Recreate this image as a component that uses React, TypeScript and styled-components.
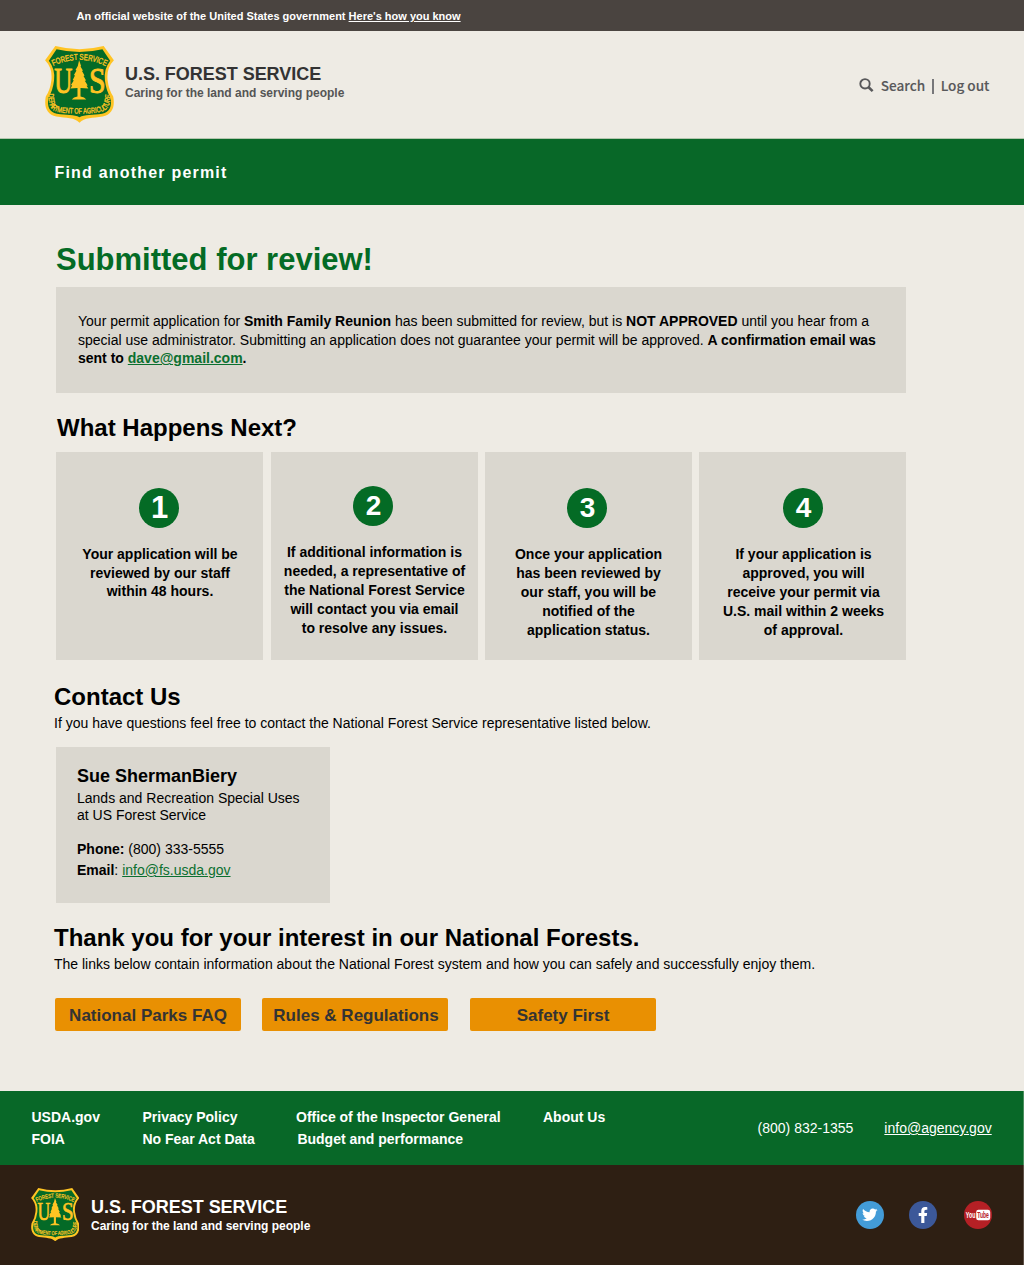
import React from "react";
import styled, { createGlobalStyle } from "styled-components";
import { FaTwitter, FaFacebookF } from "react-icons/fa";

const GlobalStyle = createGlobalStyle`
  *, *::before, *::after { box-sizing: border-box; }
  body {
    margin: 0;
    background: #eeebe4;
    color: #000;
    font-family: "Liberation Sans", Arial, Helvetica, sans-serif;
    font-size: 14px;
  }
  h1, h2, h3, p { margin: 0; }
  a { color: inherit; }
`;

const Page = styled.div`
  width: 1024px;
  height: 1265px;
  display: flex;
  flex-direction: column;
  overflow: hidden;
  white-space: nowrap;
`;

const GovBanner = styled.div`
  height: 31px;
  padding: 1px 76.6px 0;
  display: flex;
  align-items: center;
  background: #4a4440;
  color: #fff;
  font-size: 11px;
  font-weight: 700;
`;

const Masthead = styled.header`
  height: 108px;
  padding: 0 34.5px 0 44.5px;
  display: flex;
  justify-content: space-between;
  align-items: flex-start;
  border-bottom: 1px solid #b4c6ae;
`;

const Brand = styled.div<{ $gap: number; $top: number }>`
  display: flex;
  gap: ${(p) => p.$gap}px;
  padding-top: ${(p) => p.$top}px;
`;

const BrandText = styled.div<{ $top: number; $light?: boolean }>`
  padding-top: ${(p) => p.$top}px;
  color: ${(p) => (p.$light ? "#fff" : "#555")};
`;

const BrandName = styled.div<{ $light?: boolean }>`
  font-size: 18px;
  line-height: 20px;
  font-weight: 700;
  letter-spacing: -0.03px;
  color: ${(p) => (p.$light ? "#fff" : "#333")};
`;

const Tagline = styled.div`
  font-size: 12px;
  line-height: 18px;
  font-weight: 700;
`;

const Utility = styled.nav`
  display: flex;
  align-items: center;
  padding-top: 41px;
  font: 500 13.6px/26px "Noto Sans CJK SC", "Noto Sans", sans-serif;
  -webkit-text-stroke: 0.12px #58585a;
  color: #58585a;
  svg { margin-right: 7px; }
`;

const Divider = styled.span`
  width: 2px;
  height: 15px;
  margin: 3px 7px 0 6.5px;
  background: #77777a;
`;

const NavBar = styled.nav`
  height: 66px;
  padding: 1px 54.5px 0;
  display: flex;
  align-items: center;
  background: #086828;
  color: #fff;
  font-size: 16px;
  font-weight: 700;
  letter-spacing: 1.2px;
`;

const Main = styled.main`
  flex: 1;
  padding: 36px 54px 0;
`;

const PageTitle = styled.h1`
  padding-left: 2px;
  font-size: 31px;
  line-height: 38px;
  color: #046b25;
`;

const Notice = styled.p`
  width: 850px;
  height: 106px;
  margin: 8px 0 0 2px;
  padding: 25px 22px 0;
  background: #dad7cf;
  line-height: 18.6px;
`;

const GreenLink = styled.a`
  color: #0b7030;
`;

const Heading = styled.h2<{ $top: number; $indent?: number }>`
  margin-top: ${(p) => p.$top}px;
  padding-left: ${(p) => p.$indent ?? 0}px;
  font-size: 24px;
  line-height: 28px;
`;

const Lead = styled.p`
  line-height: 18px;
  margin-top: 3px;
`;

const Steps = styled.div`
  width: 850px;
  margin: 10px 0 0 2px;
  display: grid;
  grid-template-columns: 215px 214px 214px 207px;
`;

const StepCard = styled.div<{ $top: number }>`
  width: 207px;
  height: 208px;
  padding-top: ${(p) => p.$top}px;
  display: flex;
  flex-direction: column;
  align-items: center;
  background: #dad7cf;
`;

const StepNumber = styled.div<{ $size: number; $shift: number }>`
  width: 40px;
  height: 40px;
  margin-left: ${(p) => p.$shift}px;
  padding-left: 1px;
  border-radius: 50%;
  display: flex;
  align-items: center;
  justify-content: center;
  background: #046b25;
  color: #fff;
  font-size: ${(p) => p.$size}px;
  font-weight: 700;
`;

const StepText = styled.p<{ $leading: number; $shift: number }>`
  margin: 17px 0 0 ${(p) => p.$shift}px;
  text-align: center;
  font-weight: 700;
  line-height: ${(p) => p.$leading}px;
  white-space: pre-line;
`;

const ContactCard = styled.div`
  width: 274px;
  height: 156px;
  margin: 15px 0 0 2px;
  padding: 18px 21px 0;
  background: #dad7cf;
`;

const ContactName = styled.h3`
  font-size: 18px;
  line-height: 22px;
`;

const ContactRole = styled.p`
  margin-top: 3px;
  line-height: 17px;
`;

const ContactDetails = styled.p`
  margin-top: 15px;
  line-height: 21px;
`;

const Links = styled.div`
  margin: 25px 0 0 1px;
  display: grid;
  grid-template-columns: 207px 208px 186px;
`;

const LinkButton = styled.button<{ $indent?: number }>`
  width: 186px;
  height: 33px;
  padding: 2px 0 0 ${(p) => p.$indent ?? 0}px;
  border: 0;
  border-radius: 2px;
  background: #e99002;
  color: #333;
  font: 700 17px "Liberation Sans", Arial, sans-serif;
`;

const FooterNav = styled.footer`
  height: 74px;
  padding: 0 31.3px 0 31.5px;
  display: flex;
  justify-content: space-between;
  align-items: center;
  background: #086828;
  border-right: 1px solid #4b8f5e;
  color: #fff;
`;

const FooterLinks = styled.div`
  display: grid;
  grid-template-columns: 111px 153.5px 247px auto;
  font-weight: 700;
  line-height: 22px;
`;

const FooterLink = styled.span<{ $indent?: number }>`
  padding-left: ${(p) => p.$indent ?? 0}px;
`;

const FooterContact = styled.div`
  display: flex;
  gap: 31px;
`;

const FooterBrand = styled.footer`
  height: 100px;
  padding: 0 31px 0 30.8px;
  display: flex;
  justify-content: space-between;
  background: #2e1f13;
  border-right: 1px solid #5d5047;
  color: #fff;
`;

const Social = styled.div`
  display: flex;
  padding-top: 36px;
`;

const SocialBadge = styled.a<{ $color: string; $gap?: number }>`
  width: 28px;
  height: 28px;
  margin-left: ${(p) => p.$gap ?? 0}px;
  border-radius: 50%;
  display: flex;
  align-items: center;
  justify-content: center;
  background: ${(p) => p.$color};
  color: #fff;
`;

function Shield({ width, height, id }: { width: number; height: number; id: string }) {
  return (
    <svg width={width} height={height} viewBox="6.7 6.7 68.6 76.6" preserveAspectRatio="none">
      <defs>
        <path id={`${id}-top`} d="M14 27 Q40.8 14 67.5 27" />
        <path id={`${id}-bottom`} d="M10 53 C10 67 13 71.8 22 72.8 Q41 75.2 59.5 72.8 C68.5 71.8 72 67 72 53" />
      </defs>
      <path
        d="M17 6.8 Q41 13 65 6.8 L75.2 21 Q67.5 29 69 41 Q70 50 74.5 57 C76.5 67 73.5 75 64 76.8 C54 78.5 46 77.5 41 83 C36 77.5 28 78.5 18 76.8 C8.5 75 5.5 67 7.5 57 Q12 50 13 41 Q14.5 29 6.8 21 Z"
        fill="#ffc423"
      />
      <path
        d="M18.2 10 Q41 15.5 63.8 10 L71.5 21.3 Q64.8 30 66.3 41 Q67.5 51 71.8 58 C73.5 67 71 72.7 63.5 74 C54 75.5 46 74.5 41 77.5 C36 74.5 28 75.5 18.5 74 C11 72.7 8.5 67 10.2 58 Q14.5 51 15.7 41 Q17.2 30 10.5 21.3 Z"
        fill="#046a27"
      />
      <g fill="#ffc423" stroke="#ffc423" strokeWidth="0.35" fontFamily="Liberation Sans, Arial, sans-serif">
        <text fontSize="8.4">
          <textPath href={`#${id}-top`} startOffset="1" textLength="54" lengthAdjust="spacingAndGlyphs">FOREST SERVICE</textPath>
        </text>
        <text fontSize="7.8">
          <textPath href={`#${id}-bottom`} startOffset="1" textLength="87" lengthAdjust="spacingAndGlyphs">DEPARTMENT OF AGRICULTURE</textPath>
        </text>
      </g>
      <g fill="#ffc423" stroke="#ffc423" strokeWidth="0.9" fontFamily="Liberation Serif, serif" fontSize="35">
        <text x="16" y="53" textLength="18" lengthAdjust="spacingAndGlyphs">U</text>
        <text x="50.5" y="53" textLength="16.5" lengthAdjust="spacingAndGlyphs">S</text>
      </g>
      <path
        d="M40.6 21 L42.6 26.5 L42 27 L44.4 31 L43.5 31.5 L46 36 L45 36.5 L47.5 41 L46.3 41.3 L49.2 46 L48 46.3 L49.8 49 L42 48.6 L42 57 Q46 57.6 47.8 60 L33.3 60 Q35 57.6 39 57 L39 48.6 L32 49 L33.7 46 L32.5 45.5 L35.3 41 L34.3 40.6 L36.5 36 L35.5 35.6 L38 31 L37 30.6 L39.3 26.5 Z"
        fill="#ffc423"
      />
    </svg>
  );
}

function SearchIcon() {
  return (
    <svg width="15" height="15" viewBox="0 0 15 15" fill="none" stroke="#58585a">
      <circle cx="6" cy="5.8" r="4.7" strokeWidth="1.9" />
      <path d="M9.6 9.3 L13.6 13.1" strokeWidth="2.6" />
    </svg>
  );
}

function YouTubeMark() {
  return (
    <svg width="28" height="18" viewBox="0 0 28 18">
      <rect x="12.2" y="3.8" width="14" height="10.4" rx="2.2" fill="#fff" />
      <g fontFamily="Liberation Sans, Arial, sans-serif" fontWeight="700" fontSize="9.6">
        <text x="1.8" y="12.4" fill="#fff" textLength="9.6" lengthAdjust="spacingAndGlyphs">You</text>
        <text x="13.2" y="12.4" fill="#b52025" textLength="11.6" lengthAdjust="spacingAndGlyphs">Tube</text>
      </g>
    </svg>
  );
}

const steps = [
  {
    top: 36, size: 31, circleShift: -1, textShift: 1, leading: 18.6,
    text: "Your application will be\nreviewed by our staff\nwithin 48 hours.",
  },
  {
    top: 34, size: 28, circleShift: -3, textShift: 0, leading: 19,
    text: "If additional information is\nneeded, a representative of\nthe National Forest Service\nwill contact you via email\nto resolve any issues.",
  },
  {
    top: 36, size: 28, circleShift: -3, textShift: 0, leading: 19,
    text: "Once your application\nhas been reviewed by\nour staff, you will be\nnotified of the\napplication status.",
  },
  {
    top: 36, size: 28, circleShift: 1, textShift: 2, leading: 19,
    text: "If your application is\napproved, you will\nreceive your permit via\nU.S. mail within 2 weeks\nof approval.",
  },
];

export default function App() {
  return (
    <Page>
      <GlobalStyle />
      <GovBanner>
        <span>An official website of the United States government <a href="#how">Here's how you know</a></span>
      </GovBanner>
      <Masthead>
        <Brand $gap={11.5} $top={15}>
          <Shield width={69} height={77} id="head" />
          <BrandText $top={18}>
            <BrandName>U.S. FOREST SERVICE</BrandName>
            <Tagline>Caring for the land and serving people</Tagline>
          </BrandText>
        </Brand>
        <Utility>
          <SearchIcon />
          <span>Search</span>
          <Divider />
          <span>Log out</span>
        </Utility>
      </Masthead>
      <NavBar>Find another permit</NavBar>
      <Main>
        <PageTitle>Submitted for review!</PageTitle>
        <Notice>
          Your permit application for <b>Smith Family Reunion</b> has been submitted for review, but is <b>NOT APPROVED</b> until you hear from a<br />
          special use administrator. Submitting an application does not guarantee your permit will be approved. <b>A confirmation email was</b><br />
          <b>sent to <GreenLink href="#mail">dave@gmail.com</GreenLink>.</b>
        </Notice>
        <Heading $top={21} $indent={3}>What Happens Next?</Heading>
        <Steps>
          {steps.map((step, i) => (
            <StepCard key={i} $top={step.top}>
              <StepNumber $size={step.size} $shift={step.circleShift}>{i + 1}</StepNumber>
              <StepText $leading={step.leading} $shift={step.textShift}>{step.text}</StepText>
            </StepCard>
          ))}
        </Steps>
        <Heading $top={23}>Contact Us</Heading>
        <Lead>If you have questions feel free to contact the National Forest Service representative listed below.</Lead>
        <ContactCard>
          <ContactName>Sue ShermanBiery</ContactName>
          <ContactRole>Lands and Recreation Special Uses<br />at US Forest Service</ContactRole>
          <ContactDetails>
            <b>Phone:</b> (800) 333-5555<br />
            <b>Email</b>: <GreenLink href="#info">info@fs.usda.gov</GreenLink>
          </ContactDetails>
        </ContactCard>
        <Heading $top={21}>Thank you for your interest in our National Forests.</Heading>
        <Lead>The links below contain information about the National Forest system and how you can safely and successfully enjoy them.</Lead>
        <Links>
          <LinkButton>National Parks FAQ</LinkButton>
          <LinkButton $indent={2}>Rules &amp; Regulations</LinkButton>
          <LinkButton>Safety First</LinkButton>
        </Links>
      </Main>
      <FooterNav>
        <FooterLinks>
          <FooterLink>USDA.gov</FooterLink>
          <FooterLink>Privacy Policy</FooterLink>
          <FooterLink>Office of the Inspector General</FooterLink>
          <FooterLink>About Us</FooterLink>
          <FooterLink>FOIA</FooterLink>
          <FooterLink>No Fear Act Data</FooterLink>
          <FooterLink $indent={1.4}>Budget and performance</FooterLink>
        </FooterLinks>
        <FooterContact>
          <span>(800) 832-1355</span>
          <a href="#agency">info@agency.gov</a>
        </FooterContact>
      </FooterNav>
      <FooterBrand>
        <Brand $gap={11.7} $top={22.7}>
          <Shield width={48.5} height={53.5} id="foot" />
          <BrandText $top={9.3} $light>
            <BrandName $light>U.S. FOREST SERVICE</BrandName>
            <Tagline>Caring for the land and serving people</Tagline>
          </BrandText>
        </Brand>
        <Social>
          <SocialBadge $color="#439cd8"><FaTwitter size={15.5} /></SocialBadge>
          <SocialBadge $color="#3c5899" $gap={25}><FaFacebookF size={16} /></SocialBadge>
          <SocialBadge $color="#b52025" $gap={27}><YouTubeMark /></SocialBadge>
        </Social>
      </FooterBrand>
    </Page>
  );
}
